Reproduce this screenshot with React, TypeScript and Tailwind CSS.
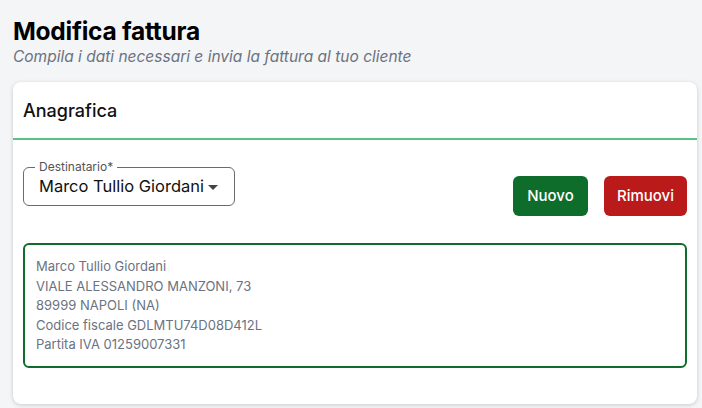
import { useState } from "react";

const font = { fontFamily: "Inter, 'Noto Sans', sans-serif" };

const cliente = {
  nome: "Marco Tullio Giordani",
  indirizzo: "VIALE ALESSANDRO MANZONI, 73",
  citta: "89999 NAPOLI (NA)",
  cf: "GDLMTU74D08D412L",
  piva: "01259007331",
};

export default function App() {
  const [dest] = useState(cliente.nome);

  return (
    <div className="min-h-screen bg-[#f4f5f7] pl-[13px] pr-[5px] pt-[16px] pb-[6px]" style={font}>
      <h1 className="text-[24.5px] font-bold leading-[30px] tracking-[-0.01em] text-black">Modifica fattura</h1>
      <p className="text-[15.5px] italic leading-[22px] text-[#6b7280]">
        Compila i dati necessari e invia la fattura al tuo cliente
      </p>

      <div className="mt-[14px] rounded-[8px] bg-white shadow-[0_1px_4px_rgba(0,0,0,0.18)]">
        <div className="flex h-[58px] items-center border-b-2 border-[#5bbf86] px-[10px]">
          <h2 className="text-[18px] font-medium text-[#111]">Anagrafica</h2>
        </div>

        <div className="px-[10px] pt-[27px] pb-[36px]">
          <div className="flex items-start justify-between">
            <div className="relative flex h-[39px] w-[212px] items-center rounded-[6px] border border-[#6b6b6b] pl-[15px] pr-[10px]">
              <span className="absolute -top-[8px] left-[11px] bg-white px-[4px] text-[12px] leading-[14px] text-[#555]">
                Destinatario*
              </span>
              <span className="whitespace-nowrap text-[16.5px] leading-none text-[#111]">{dest}</span>
              <svg width="10" height="6" viewBox="0 0 10 6" className="ml-[4px] mt-[2px] shrink-0">
                <path d="M0 0h10L5 5z" fill="#444" />
              </svg>
            </div>

            <div className="mt-[9px] flex gap-[16px]">
              <button className="h-[40px] w-[75px] rounded-[6px] bg-[#0f6d2c] text-[15px] font-medium text-white">
                Nuovo
              </button>
              <button className="h-[40px] w-[83px] rounded-[6px] bg-[#bb1a1b] text-[15px] font-medium text-white">
                Rimuovi
              </button>
            </div>
          </div>

          <div className="mt-[27px] rounded-[6px] border-2 border-[#0f6d2c] px-[11px] pt-[12px] pb-[11px] text-[13px] leading-[19.6px] text-[#6b7280]">
            <div>{cliente.nome}</div>
            <div>{cliente.indirizzo}</div>
            <div>{cliente.citta}</div>
            <div>Codice fiscale {cliente.cf}</div>
            <div>Partita IVA {cliente.piva}</div>
          </div>
        </div>
      </div>
    </div>
  );
}
